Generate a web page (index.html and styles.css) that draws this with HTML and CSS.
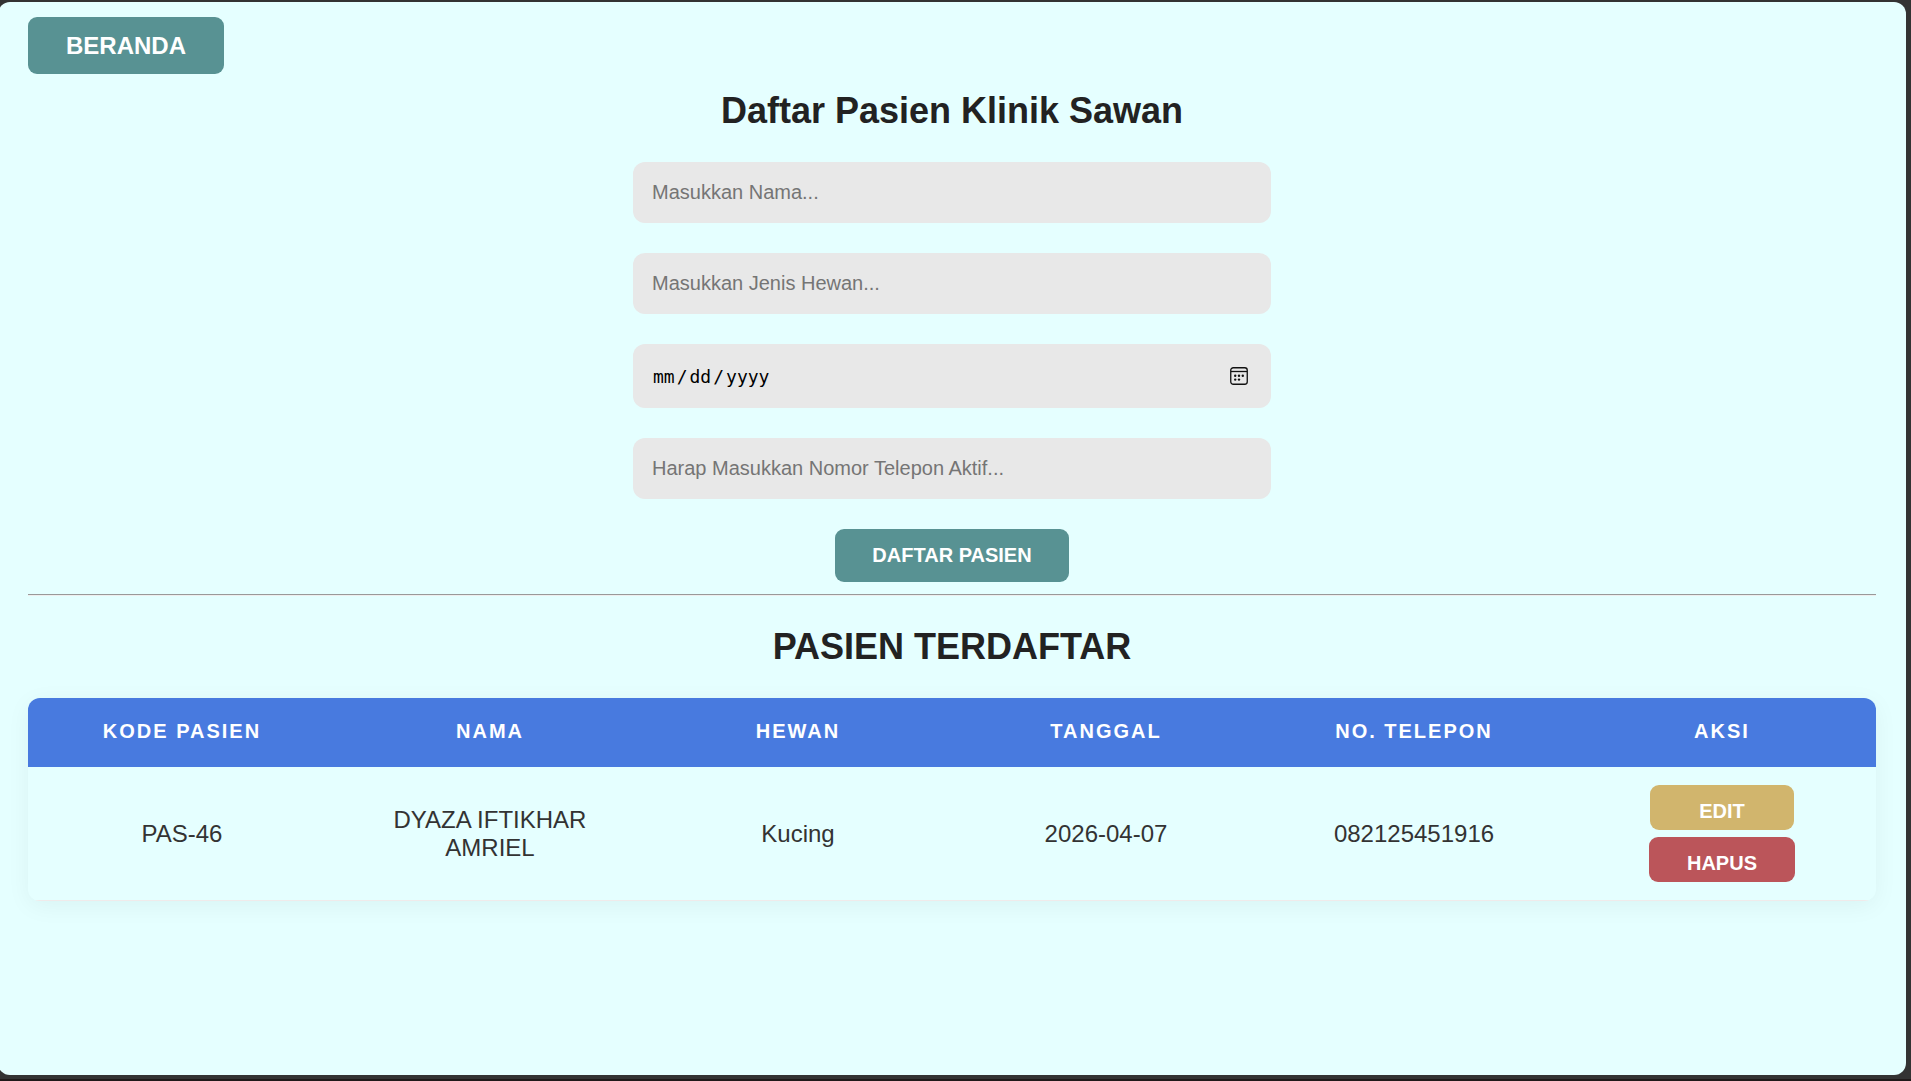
FILE: index.html
```
<!DOCTYPE html>
<html lang="en">
<head>
  <meta charset="UTF-8" />
  <meta name="viewport" content="width=device-width, initial-scale=1.0" />
  <title>Daftar Pasien Klinik Sawan</title>
  <link rel="stylesheet" href="styles.css">
</head>
<body>
  <div class="page">
    <nav class="navbar">
      <a href="index.html" class="btn btn-beranda">BERANDA</a>
    </nav>

    <!-- Form pendaftaran -->
    <h1 class="title">Daftar Pasien Klinik Sawan</h1>
    <form class="form-pasien">
      <input type="text" name="nama" class="input" placeholder="Masukkan Nama..." aria-label="Nama">
      <input type="text" name="hewan" class="input" placeholder="Masukkan Jenis Hewan..." aria-label="Jenis Hewan">
      <div class="date-field">
        <input type="date" name="tanggal" class="input input-date" aria-label="Tanggal">
        <svg class="date-icon" viewBox="0 0 18 18" fill="none" stroke="#111" aria-hidden="true">
          <rect x="0.75" y="0.75" width="16.5" height="16.5" rx="2.5" stroke-width="1.3" />
          <path d="M1 4.5h16" stroke-width="1.3" />
          <g fill="#111" stroke="none">
            <circle cx="5.2" cy="8.8" r="1.2" />
            <circle cx="9" cy="8.8" r="1.2" />
            <circle cx="12.8" cy="8.8" r="1.2" />
            <circle cx="5.2" cy="12.6" r="1.2" />
            <circle cx="9" cy="12.6" r="1.2" />
          </g>
        </svg>
      </div>
      <input type="tel" name="telepon" class="input" placeholder="Harap Masukkan Nomor Telepon Aktif..." aria-label="Nomor Telepon">
      <button type="submit" class="btn">DAFTAR PASIEN</button>
    </form>

    <hr class="divider">

    <!-- Tabel pasien -->
    <h2 class="title">PASIEN TERDAFTAR</h2>
    <table class="tabel-pasien">
      <thead>
        <tr>
          <th>KODE PASIEN</th>
          <th>NAMA</th>
          <th>HEWAN</th>
          <th>TANGGAL</th>
          <th>NO. TELEPON</th>
          <th>AKSI</th>
        </tr>
      </thead>
      <tbody>
        <tr>
          <td>PAS-46</td>
          <td>DYAZA IFTIKHAR AMRIEL</td>
          <td>Kucing</td>
          <td>2026-04-07</td>
          <td>082125451916</td>
          <td>
            <div class="aksi">
              <button type="button" class="btn btn-aksi btn-edit">EDIT</button>
              <button type="button" class="btn btn-aksi btn-hapus">HAPUS</button>
            </div>
          </td>
        </tr>
      </tbody>
    </table>
  </div>
</body>
</html>
```
FILE: styles.css
```
* {
  margin: 0;
  padding: 0;
  box-sizing: border-box;
}

body {
  min-height: 100vh;
  display: flex;
  flex-direction: column;
  padding: 2px 5px 4px 0;
  background: #333;
  border-bottom: 2px solid #201a1a;
  font-family: "Liberation Sans", Arial, sans-serif;
  color: #333;
  overflow-x: hidden;
}

.page {
  flex-grow: 1;
  margin-left: -2px;
  padding: 15px 30px;
  background: #e5ffff;
  border-radius: 12px;
}

.navbar {
  display: flex;
}

.btn {
  padding: 15px 37px;
  border: none;
  border-radius: 9px;
  background: #589293;
  color: #fff;
  font-family: inherit;
  font-size: 20px;
  font-weight: bold;
  line-height: 23px;
  text-align: center;
  text-decoration: none;
  cursor: pointer;
}

.btn:hover {
  opacity: 0.85;
}

.btn-beranda {
  padding: 15px 38px;
  font-size: 24px;
  line-height: 27px;
}

.title {
  font-size: 36px;
  line-height: 42px;
  text-align: center;
  color: #222;
}

h1.title {
  margin: 16px 0 30px;
}

h2.title {
  margin: 30px 0;
}

.form-pasien {
  display: flex;
  flex-direction: column;
  align-items: center;
  gap: 30px;
  width: 638px;
  max-width: 100%;
  margin: 0 auto 12px;
}

.input {
  width: 100%;
  padding: 19px;
  border: none;
  border-radius: 12px;
  background: #e8e8e8;
  font-family: inherit;
  font-size: 20px;
  line-height: 23px;
}

.input::placeholder {
  color: #757575;
}

.date-field {
  position: relative;
  width: 100%;
}

.input-date {
  display: block;
  height: 64px;
  font-family: "DejaVu Sans Mono", monospace;
  font-size: 18px;
  color: #000;
}

.input-date::-webkit-datetime-edit-text {
  padding: 0 1px;
}

/* native icon stays clickable under the drawn one */
.input-date::-webkit-calendar-picker-indicator {
  opacity: 0;
}

.date-icon {
  position: absolute;
  top: 23px;
  right: 23px;
  width: 18px;
  height: 18px;
  pointer-events: none;
}

.divider {
  border: none;
  border-top: 1px solid #999;
  border-bottom: 1px solid #eee;
}

.tabel-pasien {
  width: 100%;
  table-layout: fixed;
  border-collapse: separate;
  border-spacing: 0;
  border-radius: 12px;
  overflow: hidden;
  box-shadow: 0 5px 25px rgba(0, 0, 0, 0.05);
  text-align: center;
}

.tabel-pasien th {
  padding: 22px 23px 24px;
  background: #487adf;
  color: #fff;
  font-size: 20px;
  line-height: 23px;
  letter-spacing: 2px;
}

.tabel-pasien td {
  padding: 18px 23px;
  border-bottom: 1px solid #f0eaea;
  font-size: 24px;
  line-height: 28px;
}

.aksi {
  display: flex;
  flex-direction: column;
  align-items: center;
  gap: 7px;
}

.btn-aksi {
  min-width: 144px;
  padding: 15px 38px 7px;
}

.btn-edit {
  background: #d1b56d;
}

.btn-hapus {
  background: #bb555a;
}
```
